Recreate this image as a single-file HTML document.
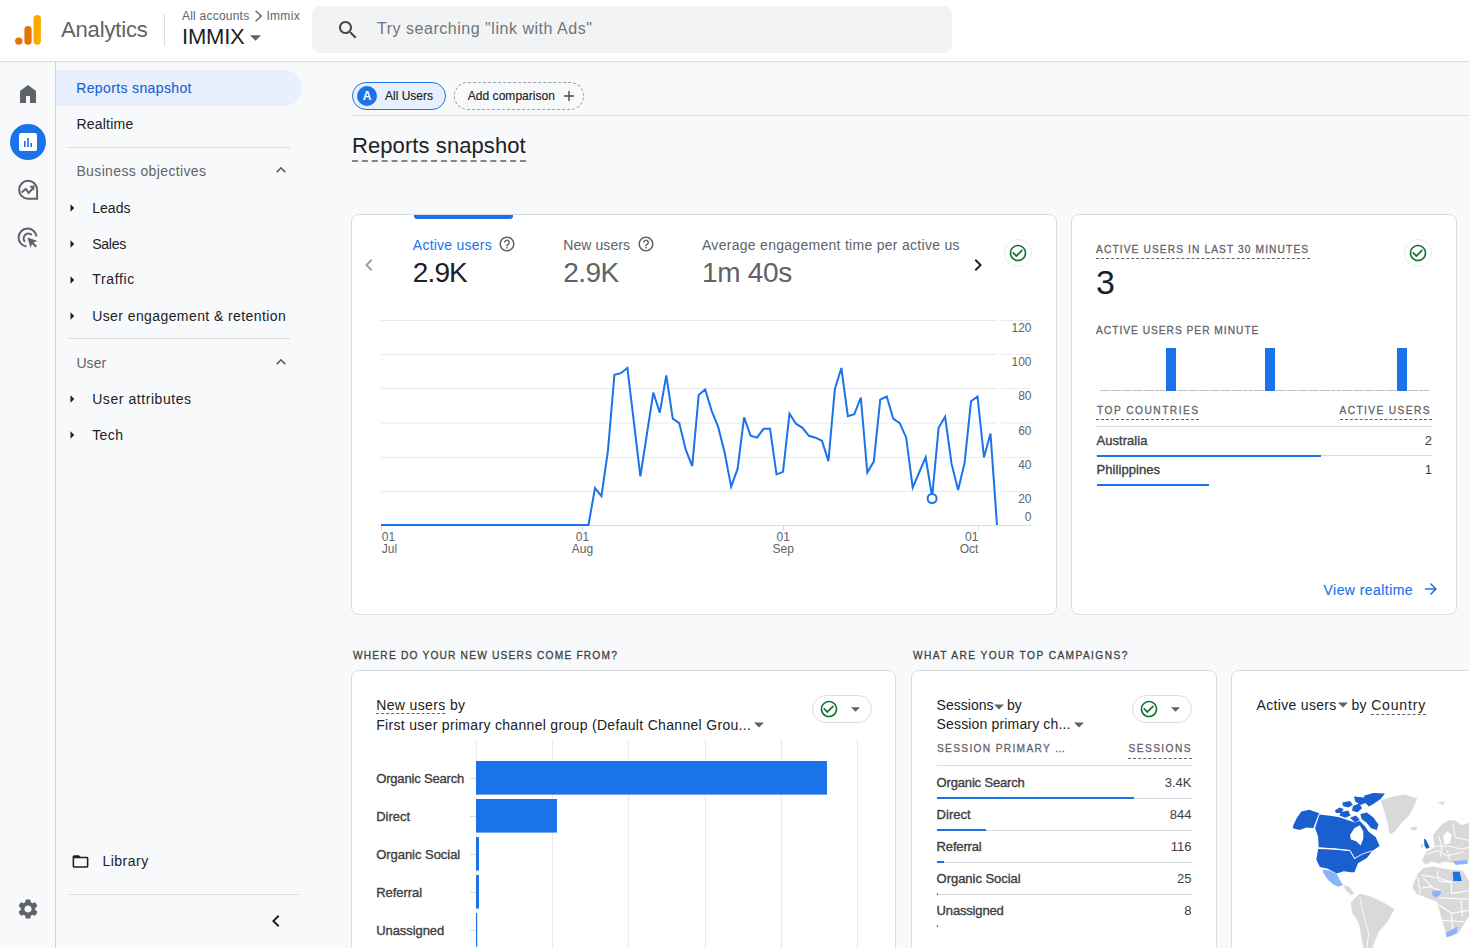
<!DOCTYPE html>
<html><head><meta charset="utf-8"><style>
html,body{margin:0;padding:0;width:1469px;height:948px;overflow:hidden;background:#f8f9fa;font-family:"Liberation Sans", sans-serif;}
.a{position:absolute;}
.t{position:absolute;white-space:nowrap;line-height:1;}
#t0{letter-spacing:-0.161px}
#t1{letter-spacing:0.225px}
#t2{letter-spacing:0.320px}
#t3{letter-spacing:-0.212px}
#t4{letter-spacing:0.525px}
#t5{letter-spacing:0.373px}
#t6{letter-spacing:0.219px}
#t7{letter-spacing:0.371px}
#t8{letter-spacing:0.049px}
#t9{letter-spacing:-0.246px}
#t10{letter-spacing:0.668px}
#t11{letter-spacing:0.411px}
#t12{letter-spacing:0.109px}
#t13{letter-spacing:0.564px}
#t14{letter-spacing:0.430px}
#t15{letter-spacing:0.515px}
#t17{letter-spacing:-0.002px}
#t18{letter-spacing:0.034px}
#t19{letter-spacing:0.085px}
#t20{letter-spacing:0.246px}
#t21{letter-spacing:-0.877px}
#t22{letter-spacing:0.095px}
#t23{letter-spacing:-0.552px}
#t24{letter-spacing:0.286px}
#t25{letter-spacing:-0.305px}
#t41{letter-spacing:1.255px}
#t43{letter-spacing:1.127px}
#t44{letter-spacing:1.658px}
#t45{letter-spacing:1.568px}
#t46{letter-spacing:0.047px}
#t48{letter-spacing:0.075px}
#t50{letter-spacing:0.432px}
#t51{letter-spacing:1.342px}
#t52{letter-spacing:0.374px}
#t53{letter-spacing:0.313px}
#t54{letter-spacing:-0.166px}
#t55{letter-spacing:0.008px}
#t56{letter-spacing:-0.039px}
#t57{letter-spacing:-0.031px}
#t58{letter-spacing:-0.066px}
#t59{letter-spacing:1.583px}
#t60{letter-spacing:0.023px}
#t62{letter-spacing:0.156px}
#t63{letter-spacing:1.488px}
#t64{letter-spacing:1.567px}
#t65{letter-spacing:-0.166px}
#t67{letter-spacing:0.008px}
#t69{letter-spacing:-0.156px}
#t71{letter-spacing:-0.039px}
#t73{letter-spacing:-0.166px}
#t75{letter-spacing:0.312px}
#t77{letter-spacing:0.824px}
</style></head><body>
<div class="a" style="left:0px;top:0px;width:1469px;height:61px;background:#fff;"></div>
<div class="a" style="left:0px;top:61px;width:1469px;height:1px;background:#dadce0;"></div>
<svg class="a" style="left:0;top:0" width="60" height="60" viewBox="0 0 60 60"><rect x="33.5" y="15" width="7.4" height="29.8" rx="3.7" fill="#f9ab00"/><rect x="24.4" y="26" width="7.2" height="18.8" rx="3.6" fill="#e37400"/><circle cx="18.8" cy="41.1" r="3.7" fill="#e37400"/></svg>
<div class="t" id="t0" style="left:61.00px;top:19.37px;font-size:22px;color:#5f6368;font-weight:400;">Analytics</div>
<div class="a" style="left:164px;top:14px;width:1px;height:32px;background:#dadce0;"></div>
<div class="t" id="t1" style="left:182.00px;top:9.64px;font-size:12px;color:#5f6368;font-weight:400;">All accounts</div>
<svg class="a" style="left:0;top:0" width="300" height="30"><polyline points="255.6,10.8 261.2,16 255.6,21.2" fill="none" stroke="#5f6368" stroke-width="1.4"/></svg>
<div class="t" id="t2" style="left:266.40px;top:9.64px;font-size:12px;color:#5f6368;font-weight:400;">Immix</div>
<div class="t" id="t3" style="left:182.00px;top:26.07px;font-size:22px;color:#202124;font-weight:400;">IMMIX</div>
<svg class="a" style="left:250px;top:35px" width="11" height="6" viewBox="0 0 10 5"><path d="M0 0h10L5 5z" fill="#5f6368"/></svg>
<div class="a" style="left:312px;top:6px;width:640px;height:47px;background:#f1f3f4;border-radius:8px;"></div>
<svg class="a" style="left:336px;top:18px;" width="24" height="24" viewBox="0 0 24 24"><path fill="#444746" d="M15.5 14h-.79l-.28-.27C15.41 12.59 16 11.11 16 9.5 16 5.91 13.09 3 9.5 3S3 5.91 3 9.5 5.91 16 9.5 16c1.610 0 3.09-.59 4.23-1.57l.27.28v.79l5 4.99L20.49 19l-4.99-5zm-6 0C7.01 14 5 11.99 5 9.5S7.01 5 9.5 5 14 7.01 14 9.5 11.99 14 9.5 14z"/></svg>
<div class="t" id="t4" style="left:377.00px;top:20.85px;font-size:16px;color:#70757a;font-weight:400;">Try searching "link with Ads"</div>
<div class="a" style="left:0px;top:62px;width:55px;height:886px;background:#f8f9fa;"></div>
<div class="a" style="left:55px;top:62px;width:1px;height:886px;background:#d3d3d3;"></div>
<svg class="a" style="left:16px;top:82px;" width="24" height="24" viewBox="0 0 24 24"><path fill="#5f6368" d="M4 21V9l8-6 8 6v12h-6v-7h-4v7z"/></svg>
<div class="a" style="left:10px;top:124px;width:36px;height:36px;border-radius:50%;background:#1a73e8"></div>
<svg class="a" style="left:16px;top:130px" width="24" height="24" viewBox="0 0 24 24"><rect x="3" y="3" width="18" height="18" rx="2" fill="#fff"/><rect x="8" y="11" width="1.6" height="6" fill="#1a73e8"/><rect x="11.2" y="8" width="1.6" height="9" fill="#1a73e8"/><rect x="14.4" y="13" width="1.6" height="4" fill="#1a73e8"/></svg>
<svg class="a" style="left:16px;top:178px" width="24" height="24" viewBox="0 0 24 24"><path d="M12.1 2.8a9 9 0 1 0 0 18h9v-9a9 9 0 0 0-9-9z" fill="none" stroke="#5f6368" stroke-width="2"/><path d="M5.6 14.6l4.2-3.6 2.9 3.9 4.6-5" fill="none" stroke="#5f6368" stroke-width="2"/><path d="M18.6 7.6l-5.2.5 4.7 4.7z" fill="#5f6368"/></svg>
<svg class="a" style="left:16px;top:226px" width="24" height="24" viewBox="0 0 24 24"><path d="M10.5 20.5A9 9 0 1 1 20.5 10.5" fill="none" stroke="#5f6368" stroke-width="2"/><path d="M9 15.8A4.5 4.5 0 1 1 15.8 9" fill="none" stroke="#5f6368" stroke-width="2"/><path d="M11.5 11.5l10 3.5-4 1.5 3.5 3.5-1.5 1.5-3.5-3.5-1.5 4z" fill="#5f6368"/></svg>
<svg class="a" style="left:16px;top:897px;" width="24" height="24" viewBox="0 0 24 24"><path fill="#5f6368" d="M19.14 12.94c.04-.3.06-.61.06-.94 0-.32-.02-.64-.07-.94l2.03-1.58c.18-.14.23-.41.12-.61l-1.92-3.32c-.12-.22-.37-.29-.59-.22l-2.39.96c-.5-.38-1.03-.7-1.62-.94l-.36-2.54c-.04-.24-.24-.41-.48-.41h-3.84c-.24 0-.43.17-.47.41l-.36 2.54c-.59.24-1.13.57-1.62.94l-2.39-.96c-.22-.08-.47 0-.59.22L2.74 8.87c-.12.21-.08.47.12.61l2.03 1.58c-.05.3-.09.63-.09.94s.02.64.07.94l-2.03 1.58c-.18.14-.23.41-.12.61l1.92 3.32c.12.22.37.29.59.22l2.39-.96c.5.38 1.03.7 1.62.94l.36 2.54c.05.24.24.41.48.41h3.84c.24 0 .44-.17.47-.41l.36-2.54c.59-.24 1.13-.56 1.62-.94l2.39.96c.22.08.47 0 .59-.22l1.92-3.32c.12-.22.07-.47-.12-.61l-2.01-1.58zM12 15.6c-1.98 0-3.6-1.62-3.6-3.6s1.62-3.6 3.6-3.6 3.6 1.62 3.6 3.6-1.62 3.6-3.6 3.6z"/></svg>
<div class="a" style="left:56px;top:62px;width:248px;height:886px;background:#f8f9fa;"></div>
<div class="a" style="left:56px;top:70px;width:246px;height:36px;background:#e8f0fe;border-radius:0 18px 18px 0;"></div>
<div class="t" id="t5" style="left:76.20px;top:81.45px;font-size:14px;color:#1662d6;font-weight:400;-webkit-text-stroke:0.12px #1662d6;">Reports snapshot</div>
<div class="t" id="t6" style="left:76.40px;top:117.35px;font-size:14px;color:#202124;font-weight:400;">Realtime</div>
<div class="a" style="left:68px;top:147px;width:222px;height:1px;background:#dadce0;"></div>
<div class="t" id="t7" style="left:76.40px;top:164.15px;font-size:14px;color:#5f6368;font-weight:400;">Business objectives</div>
<svg class="a" style="left:269px;top:158px;transform:scale(0.8);" width="24" height="24" viewBox="0 0 24 24"><path fill="#5f6368" d="M12 8l-6 6 1.41 1.41L12 10.83l4.59 4.58L18 14z"/></svg>
<svg class="a" style="left:60px;top:195.6px;transform:scale(0.75);" width="24" height="24" viewBox="0 0 24 24"><path fill="#202124" d="M10 17l5-5-5-5v10z"/></svg>
<div class="t" id="t8" style="left:92.20px;top:200.55px;font-size:14px;color:#202124;font-weight:400;">Leads</div>
<svg class="a" style="left:60px;top:231.79999999999998px;transform:scale(0.75);" width="24" height="24" viewBox="0 0 24 24"><path fill="#202124" d="M10 17l5-5-5-5v10z"/></svg>
<div class="t" id="t9" style="left:92.20px;top:236.75px;font-size:14px;color:#202124;font-weight:400;">Sales</div>
<svg class="a" style="left:60px;top:267.5px;transform:scale(0.75);" width="24" height="24" viewBox="0 0 24 24"><path fill="#202124" d="M10 17l5-5-5-5v10z"/></svg>
<div class="t" id="t10" style="left:92.20px;top:272.45px;font-size:14px;color:#202124;font-weight:400;">Traffic</div>
<svg class="a" style="left:60px;top:303.7px;transform:scale(0.75);" width="24" height="24" viewBox="0 0 24 24"><path fill="#202124" d="M10 17l5-5-5-5v10z"/></svg>
<div class="t" id="t11" style="left:92.20px;top:308.65px;font-size:14px;color:#202124;font-weight:400;">User engagement &amp; retention</div>
<div class="a" style="left:68px;top:338px;width:222px;height:1px;background:#dadce0;"></div>
<div class="t" id="t12" style="left:76.40px;top:355.85px;font-size:14px;color:#5f6368;font-weight:400;">User</div>
<svg class="a" style="left:269px;top:350px;transform:scale(0.8);" width="24" height="24" viewBox="0 0 24 24"><path fill="#5f6368" d="M12 8l-6 6 1.41 1.41L12 10.83l4.59 4.58L18 14z"/></svg>
<svg class="a" style="left:60px;top:387.0px;transform:scale(0.75);" width="24" height="24" viewBox="0 0 24 24"><path fill="#202124" d="M10 17l5-5-5-5v10z"/></svg>
<div class="t" id="t13" style="left:92.20px;top:391.95px;font-size:14px;color:#202124;font-weight:400;">User attributes</div>
<svg class="a" style="left:60px;top:422.8px;transform:scale(0.75);" width="24" height="24" viewBox="0 0 24 24"><path fill="#202124" d="M10 17l5-5-5-5v10z"/></svg>
<div class="t" id="t14" style="left:92.20px;top:427.75px;font-size:14px;color:#202124;font-weight:400;">Tech</div>
<svg class="a" style="left:71.4px;top:851.7px;" width="19" height="19" viewBox="0 0 24 24"><path fill="#202124" d="M20 6h-8l-2-2H4c-1.1 0-1.99.9-1.99 2L2 18c0 1.1.9 2 2 2h16c1.1 0 2-.9 2-2V8c0-1.1-.9-2-2-2zm0 12H4V8h16v10z"/></svg>
<div class="t" id="t15" style="left:102.40px;top:854.35px;font-size:14px;color:#202124;font-weight:400;">Library</div>
<div class="a" style="left:69px;top:894px;width:230px;height:1px;background:#dadce0;"></div>
<svg class="a" style="left:264px;top:909px;" width="24" height="24" viewBox="0 0 24 24"><path fill="#202124" d="M15.41 7.41L14 6l-6 6 6 6 1.41-1.41L10.83 12z"/></svg>
<div class="a" style="left:304px;top:62px;width:1165px;height:886px;background:#f8f9fa;"></div>
<div class="a" style="left:352px;top:82px;width:92px;height:26px;border:1px solid #1a73e8;border-radius:14px;background:#e8f0fe"></div>
<div class="a" style="left:357px;top:86px;width:20px;height:20px;border-radius:50%;background:#1a73e8"></div>
<div class="t" id="t16" style="left:367.00px;top:90.24px;font-size:12px;color:#fff;font-weight:700;transform:translateX(-50%);">A</div>
<div class="t" id="t17" style="left:385.00px;top:89.84px;font-size:12px;color:#202124;font-weight:400;-webkit-text-stroke:0.15px #202124;">All Users</div>
<div class="a" style="left:454px;top:82px;width:128px;height:26px;border:1px dashed #9aa0a6;border-radius:14px;"></div>
<div class="t" id="t18" style="left:467.80px;top:89.84px;font-size:12px;color:#202124;font-weight:400;-webkit-text-stroke:0.15px #202124;">Add comparison</div>
<svg class="a" style="left:561px;top:88px;transform:scale(1.05);" width="16" height="16" viewBox="0 0 24 24"><path fill="#444746" d="M19 13h-6v6h-2v-6H5v-2h6V5h2v6h6v2z"/></svg>
<div class="a" style="left:352px;top:115px;width:1117px;height:1px;background:#dadce0;"></div>
<div class="t" id="t19" style="left:352.00px;top:134.57px;font-size:22px;color:#202124;font-weight:400;">Reports snapshot</div>
<div class="a" style="left:352px;top:160px;width:174px;height:0;border-top:2px dashed #80868b"></div>
<div class="a" style="left:351px;top:214px;width:704px;height:399px;border:1px solid #dadce0;border-radius:8px;background:#fff"></div>
<div class="a" style="left:413.8px;top:215px;width:99.3px;height:3.6px;background:#1a73e8;border-radius:0 0 3px 3px;"></div>
<svg class="a" style="left:357px;top:253px;" width="24" height="24" viewBox="0 0 24 24"><path fill="#9aa0a6" d="M15.41 7.41L14 6l-6 6 6 6 1.41-1.41L10.83 12z"/></svg>
<div class="t" id="t20" style="left:412.80px;top:237.85px;font-size:14px;color:#1a73e8;font-weight:400;">Active users</div>
<svg class="a" style="left:497.6px;top:235px;" width="18" height="18" viewBox="0 0 24 24"><path fill="#5f6368" d="M11 18h2v-2h-2v2zm1-16C6.48 2 2 6.48 2 12s4.48 10 10 10 10-4.48 10-10S17.52 2 12 2zm0 18c-4.410 0-8-3.59-8-8s3.59-8 8-8 8 3.59 8 8-3.59 8-8 8zm0-14c-2.21 0-4 1.79-4 4h2c0-1.1.9-2 2-2s2 .9 2 2c0 2-3 1.75-3 5h2c0-2.25 3-2.5 3-5 0-2.21-1.79-4-4-4z"/></svg>
<div class="t" id="t21" style="left:412.80px;top:258.99px;font-size:28px;color:#202124;font-weight:400;">2.9K</div>
<div class="t" id="t22" style="left:563.20px;top:237.85px;font-size:14px;color:#5f6368;font-weight:400;">New users</div>
<svg class="a" style="left:636.6px;top:235px;" width="18" height="18" viewBox="0 0 24 24"><path fill="#5f6368" d="M11 18h2v-2h-2v2zm1-16C6.48 2 2 6.48 2 12s4.48 10 10 10 10-4.48 10-10S17.52 2 12 2zm0 18c-4.410 0-8-3.59-8-8s3.59-8 8-8 8 3.59 8 8-3.59 8-8 8zm0-14c-2.21 0-4 1.79-4 4h2c0-1.1.9-2 2-2s2 .9 2 2c0 2-3 1.75-3 5h2c0-2.25 3-2.5 3-5 0-2.21-1.79-4-4-4z"/></svg>
<div class="t" id="t23" style="left:563.20px;top:258.99px;font-size:28px;color:#5f6368;font-weight:400;">2.9K</div>
<div class="t" id="t24" style="left:702.00px;top:237.85px;font-size:14px;color:#5f6368;font-weight:400;">Average engagement time per active us</div>
<div class="t" id="t25" style="left:702.00px;top:258.99px;font-size:28px;color:#5f6368;font-weight:400;">1m 40s</div>
<svg class="a" style="left:966px;top:253px;" width="24" height="24" viewBox="0 0 24 24"><path fill="#202124" d="M10 6L8.59 7.41 13.17 12l-4.58 4.59L10 18l6-6z"/></svg>
<div class="a" style="left:1003.6px;top:239px;width:28px;height:28px;border:1px solid #e8eaed;border-radius:50%;background:#fff;box-sizing:border-box"></div>
<svg class="a" style="left:1007.6px;top:243px;" width="20" height="20" viewBox="0 0 24 24"><path fill="#137333" d="M16.59 7.58L10 14.17l-3.59-3.58L5 12l5 5 8-8zM12 2C6.48 2 2 6.48 2 12s4.48 10 10 10 10-4.48 10-10S17.52 2 12 2zm0 18c-4.42 0-8-3.58-8-8s3.58-8 8-8 8 3.58 8 8-3.58 8-8 8z"/></svg>
<svg class="a" style="left:0;top:0" width="1469" height="948"><line x1="381" y1="320.5" x2="997" y2="320.5" stroke="#e8eaed" stroke-width="1"/><line x1="1001" y1="320.5" x2="1031" y2="320.5" stroke="#e8eaed" stroke-width="1"/><line x1="381" y1="354.5" x2="997" y2="354.5" stroke="#e8eaed" stroke-width="1"/><line x1="1001" y1="354.5" x2="1031" y2="354.5" stroke="#e8eaed" stroke-width="1"/><line x1="381" y1="388.5" x2="997" y2="388.5" stroke="#e8eaed" stroke-width="1"/><line x1="1001" y1="388.5" x2="1031" y2="388.5" stroke="#e8eaed" stroke-width="1"/><line x1="381" y1="423" x2="997" y2="423" stroke="#e8eaed" stroke-width="1"/><line x1="1001" y1="423" x2="1031" y2="423" stroke="#e8eaed" stroke-width="1"/><line x1="381" y1="457.5" x2="997" y2="457.5" stroke="#e8eaed" stroke-width="1"/><line x1="1001" y1="457.5" x2="1031" y2="457.5" stroke="#e8eaed" stroke-width="1"/><line x1="381" y1="491.5" x2="997" y2="491.5" stroke="#e8eaed" stroke-width="1"/><line x1="1001" y1="491.5" x2="1031" y2="491.5" stroke="#e8eaed" stroke-width="1"/><line x1="381" y1="525.5" x2="1031" y2="525.5" stroke="#dadce0" stroke-width="1"/><line x1="381.5" y1="525" x2="381.5" y2="531" stroke="#dadce0" stroke-width="1"/><line x1="582.5" y1="525" x2="582.5" y2="531" stroke="#dadce0" stroke-width="1"/><line x1="783.5" y1="525" x2="783.5" y2="531" stroke="#dadce0" stroke-width="1"/><line x1="978.5" y1="525" x2="978.5" y2="531" stroke="#dadce0" stroke-width="1"/><polyline points="381.00,525.00 387.48,525.00 393.97,525.00 400.45,525.00 406.94,525.00 413.42,525.00 419.90,525.00 426.39,525.00 432.87,525.00 439.36,525.00 445.84,525.00 452.32,525.00 458.81,525.00 465.29,525.00 471.78,525.00 478.26,525.00 484.74,525.00 491.23,525.00 497.71,525.00 504.20,525.00 510.68,525.00 517.16,525.00 523.65,525.00 530.13,525.00 536.62,525.00 543.10,525.00 549.58,525.00 556.07,525.00 562.55,525.00 569.04,525.00 575.52,525.00 582.00,525.00 588.49,525.00 594.97,488.20 601.46,496.20 607.94,450.60 614.42,374.70 620.91,373.20 627.39,368.00 633.88,422.20 640.36,476.40 646.84,434.50 653.33,392.60 659.81,412.70 666.30,375.30 672.78,418.70 679.26,423.10 685.75,449.70 692.23,466.20 698.72,395.00 705.20,389.50 711.68,410.80 718.17,426.90 724.65,452.50 731.14,486.70 737.62,468.70 744.10,417.40 750.59,435.80 757.07,437.70 763.56,428.80 770.04,428.80 776.52,474.40 783.01,471.90 789.49,413.60 795.98,423.70 802.46,427.80 808.94,435.80 815.43,437.70 821.91,440.80 828.40,461.10 834.88,388.90 841.36,368.00 847.85,416.10 854.33,414.20 860.82,397.50 867.30,472.50 873.78,461.60 880.27,399.70 886.75,396.50 893.24,418.70 899.72,423.10 906.20,437.70 912.69,487.60 919.17,472.50 925.66,457.30 932.14,497.00 938.62,427.80 945.11,416.80 951.59,463.90 958.08,490.10 964.56,463.00 971.04,401.30 977.53,396.50 984.01,457.30 990.50,433.50 996.98,525.00" fill="none" stroke="#1a73e8" stroke-width="2" stroke-linejoin="miter"/><circle cx="932.1" cy="498.5" r="4.5" fill="#fff" stroke="#1a73e8" stroke-width="2"/></svg>
<div class="t" id="t26" style="right:437.50px;top:321.74px;font-size:12px;color:#5f6368;font-weight:400;">120</div>
<div class="t" id="t27" style="right:437.50px;top:355.84px;font-size:12px;color:#5f6368;font-weight:400;">100</div>
<div class="t" id="t28" style="right:437.50px;top:389.84px;font-size:12px;color:#5f6368;font-weight:400;">80</div>
<div class="t" id="t29" style="right:437.50px;top:424.84px;font-size:12px;color:#5f6368;font-weight:400;">60</div>
<div class="t" id="t30" style="right:437.50px;top:458.84px;font-size:12px;color:#5f6368;font-weight:400;">40</div>
<div class="t" id="t31" style="right:437.50px;top:492.84px;font-size:12px;color:#5f6368;font-weight:400;">20</div>
<div class="t" id="t32" style="right:437.50px;top:510.84px;font-size:12px;color:#5f6368;font-weight:400;">0</div>
<div class="t" id="t33" style="left:381.80px;top:530.54px;font-size:12px;color:#5f6368;font-weight:400;">01</div>
<div class="t" id="t34" style="left:381.80px;top:542.64px;font-size:12px;color:#5f6368;font-weight:400;">Jul</div>
<div class="t" id="t35" style="left:582.40px;top:530.54px;font-size:12px;color:#5f6368;font-weight:400;transform:translateX(-50%);">01</div>
<div class="t" id="t36" style="left:582.40px;top:542.64px;font-size:12px;color:#5f6368;font-weight:400;transform:translateX(-50%);">Aug</div>
<div class="t" id="t37" style="left:783.20px;top:530.54px;font-size:12px;color:#5f6368;font-weight:400;transform:translateX(-50%);">01</div>
<div class="t" id="t38" style="left:783.20px;top:542.64px;font-size:12px;color:#5f6368;font-weight:400;transform:translateX(-50%);">Sep</div>
<div class="t" id="t39" style="right:490.70px;top:530.54px;font-size:12px;color:#5f6368;font-weight:400;">01</div>
<div class="t" id="t40" style="right:490.70px;top:542.64px;font-size:12px;color:#5f6368;font-weight:400;">Oct</div>
<div class="a" style="left:1071px;top:214px;width:384px;height:399px;border:1px solid #dadce0;border-radius:8px;background:#fff"></div>
<div class="t" id="t41" style="left:1096.00px;top:243.08px;font-size:11.6px;color:#5f6368;font-weight:400;-webkit-text-stroke:0.3px #5f6368;transform:scaleX(0.88);transform-origin:left center;">ACTIVE USERS IN LAST 30 MINUTES</div>
<div class="a" style="left:1096px;top:257.5px;width:214px;height:0;border-top:1px dashed #5f6368"></div>
<div class="t" id="t42" style="left:1096.00px;top:265.01px;font-size:34px;color:#202124;font-weight:400;">3</div>
<div class="a" style="left:1403.9px;top:239px;width:28px;height:28px;border:1px solid #e8eaed;border-radius:50%;background:#fff;box-sizing:border-box"></div>
<svg class="a" style="left:1407.9px;top:243px;" width="20" height="20" viewBox="0 0 24 24"><path fill="#137333" d="M16.59 7.58L10 14.17l-3.59-3.58L5 12l5 5 8-8zM12 2C6.48 2 2 6.48 2 12s4.48 10 10 10 10-4.48 10-10S17.52 2 12 2zm0 18c-4.42 0-8-3.58-8-8s3.58-8 8-8 8 3.58 8 8-3.58 8-8 8z"/></svg>
<div class="t" id="t43" style="left:1096.00px;top:324.48px;font-size:11.6px;color:#5f6368;font-weight:400;-webkit-text-stroke:0.3px #5f6368;transform:scaleX(0.88);transform-origin:left center;">ACTIVE USERS PER MINUTE</div>
<svg class="a" style="left:0;top:0" width="1469" height="948"><rect x="1100" y="390" width="10" height="1" fill="#bdc1c6"/><rect x="1111" y="390" width="10" height="1" fill="#bdc1c6"/><rect x="1122" y="390" width="10" height="1" fill="#bdc1c6"/><rect x="1133" y="390" width="10" height="1" fill="#bdc1c6"/><rect x="1144" y="390" width="10" height="1" fill="#bdc1c6"/><rect x="1155" y="390" width="10" height="1" fill="#bdc1c6"/><rect x="1166" y="348" width="10" height="43" fill="#1a73e8"/><rect x="1177" y="390" width="10" height="1" fill="#bdc1c6"/><rect x="1188" y="390" width="10" height="1" fill="#bdc1c6"/><rect x="1199" y="390" width="10" height="1" fill="#bdc1c6"/><rect x="1210" y="390" width="10" height="1" fill="#bdc1c6"/><rect x="1221" y="390" width="10" height="1" fill="#bdc1c6"/><rect x="1232" y="390" width="10" height="1" fill="#bdc1c6"/><rect x="1243" y="390" width="10" height="1" fill="#bdc1c6"/><rect x="1254" y="390" width="10" height="1" fill="#bdc1c6"/><rect x="1265" y="348" width="10" height="43" fill="#1a73e8"/><rect x="1276" y="390" width="10" height="1" fill="#bdc1c6"/><rect x="1287" y="390" width="10" height="1" fill="#bdc1c6"/><rect x="1298" y="390" width="10" height="1" fill="#bdc1c6"/><rect x="1309" y="390" width="10" height="1" fill="#bdc1c6"/><rect x="1320" y="390" width="10" height="1" fill="#bdc1c6"/><rect x="1331" y="390" width="10" height="1" fill="#bdc1c6"/><rect x="1342" y="390" width="10" height="1" fill="#bdc1c6"/><rect x="1353" y="390" width="10" height="1" fill="#bdc1c6"/><rect x="1364" y="390" width="10" height="1" fill="#bdc1c6"/><rect x="1375" y="390" width="10" height="1" fill="#bdc1c6"/><rect x="1386" y="390" width="10" height="1" fill="#bdc1c6"/><rect x="1397" y="348" width="10" height="43" fill="#1a73e8"/><rect x="1408" y="390" width="10" height="1" fill="#bdc1c6"/><rect x="1419" y="390" width="10" height="1" fill="#bdc1c6"/></svg>
<div class="t" id="t44" style="left:1096.50px;top:404.38px;font-size:11.6px;color:#5f6368;font-weight:400;-webkit-text-stroke:0.3px #5f6368;transform:scaleX(0.88);transform-origin:left center;">TOP COUNTRIES</div>
<div class="a" style="left:1096px;top:419px;width:103px;height:0;border-top:1px dashed #5f6368"></div>
<div class="t" id="t45" style="right:37.70px;top:404.38px;font-size:11.6px;color:#5f6368;font-weight:400;-webkit-text-stroke:0.3px #5f6368;transform:scaleX(0.88);transform-origin:right center;">ACTIVE USERS</div>
<div class="a" style="left:1340px;top:419px;width:92px;height:0;border-top:1px dashed #5f6368"></div>
<div class="a" style="left:1096px;top:426px;width:336px;height:1px;background:#dadce0;"></div>
<div class="t" id="t46" style="left:1096.50px;top:434.29px;font-size:13px;color:#3c4043;font-weight:400;-webkit-text-stroke:0.35px #3c4043;">Australia</div>
<div class="t" id="t47" style="right:37.00px;top:434.29px;font-size:13px;color:#3c4043;font-weight:400;">2</div>
<div class="a" style="left:1096px;top:455px;width:336px;height:1px;background:#dadce0;"></div>
<div class="a" style="left:1096.6px;top:454.8px;width:224.4px;height:2px;background:#1a73e8;"></div>
<div class="t" id="t48" style="left:1096.50px;top:462.99px;font-size:13px;color:#3c4043;font-weight:400;-webkit-text-stroke:0.35px #3c4043;">Philippines</div>
<div class="t" id="t49" style="right:37.00px;top:462.99px;font-size:13px;color:#3c4043;font-weight:400;">1</div>
<div class="a" style="left:1096.6px;top:483.5px;width:112.2px;height:2px;background:#1a73e8;"></div>
<div class="t" id="t50" style="left:1323.60px;top:582.95px;font-size:14px;color:#1a73e8;font-weight:400;-webkit-text-stroke:0.15px #1a73e8;">View realtime</div>
<svg class="a" style="left:1422px;top:580.2px;" width="18" height="18" viewBox="0 0 24 24"><path fill="#1a73e8" d="M12 4l-1.41 1.41L16.17 11H4v2h12.17l-5.58 5.59L12 20l8-8z"/></svg>
<div class="t" id="t51" style="left:352.60px;top:648.88px;font-size:11.6px;color:#3c4043;font-weight:400;-webkit-text-stroke:0.3px #3c4043;transform:scaleX(0.88);transform-origin:left center;">WHERE DO YOUR NEW USERS COME FROM?</div>
<div class="a" style="left:351px;top:670px;width:543px;height:300px;border:1px solid #dadce0;border-radius:8px;background:#fff"></div>
<div class="t" id="t52" style="left:376.20px;top:697.95px;font-size:14px;color:#202124;font-weight:400;">New users by</div>
<div class="a" style="left:376px;top:713px;width:69px;height:0;border-top:1px dashed #5f6368"></div>
<div class="t" id="t53" style="left:376.20px;top:718.05px;font-size:14px;color:#202124;font-weight:400;">First user primary channel group (Default Channel Grou...</div>
<svg class="a" style="left:754px;top:722px" width="10" height="6" viewBox="0 0 10 5"><path d="M0 0h10L5 5z" fill="#5f6368"/></svg>
<div class="a" style="left:812px;top:695px;width:60px;height:28px;border:1px solid #dadce0;border-radius:14px;box-sizing:border-box;background:#fff"></div>
<svg class="a" style="left:819px;top:699px;" width="20" height="20" viewBox="0 0 24 24"><path fill="#137333" d="M16.59 7.58L10 14.17l-3.59-3.58L5 12l5 5 8-8zM12 2C6.48 2 2 6.48 2 12s4.48 10 10 10 10-4.48 10-10S17.52 2 12 2zm0 18c-4.42 0-8-3.58-8-8s3.58-8 8-8 8 3.58 8 8-3.58 8-8 8z"/></svg>
<svg class="a" style="left:851px;top:707px" width="9" height="5" viewBox="0 0 10 5"><path d="M0 0h10L5 5z" fill="#5f6368"/></svg>
<svg class="a" style="left:0;top:0" width="1469" height="948"><line x1="476.5" y1="740" x2="476.5" y2="948" stroke="#e8eaed" stroke-width="1.2"/><line x1="552.5" y1="740" x2="552.5" y2="948" stroke="#e8eaed" stroke-width="1.2"/><line x1="628.5" y1="740" x2="628.5" y2="948" stroke="#e8eaed" stroke-width="1.2"/><line x1="705.5" y1="740" x2="705.5" y2="948" stroke="#e8eaed" stroke-width="1.2"/><line x1="781.5" y1="740" x2="781.5" y2="948" stroke="#e8eaed" stroke-width="1.2"/><line x1="857.5" y1="740" x2="857.5" y2="948" stroke="#e8eaed" stroke-width="1.2"/><rect x="476" y="761" width="351" height="33.6" fill="#1a73e8"/><line x1="470" y1="778.5" x2="476" y2="778.5" stroke="#dadce0"/><rect x="476" y="799" width="81" height="33.6" fill="#1a73e8"/><line x1="470" y1="816.5" x2="476" y2="816.5" stroke="#dadce0"/><rect x="476" y="837" width="3" height="33.6" fill="#1a73e8"/><line x1="470" y1="854.5" x2="476" y2="854.5" stroke="#dadce0"/><rect x="476" y="875" width="3" height="33.6" fill="#1a73e8"/><line x1="470" y1="892.5" x2="476" y2="892.5" stroke="#dadce0"/><rect x="476" y="913" width="1.2" height="33.6" fill="#1a73e8"/><line x1="470" y1="930.5" x2="476" y2="930.5" stroke="#dadce0"/></svg>
<div class="t" id="t54" style="left:376.20px;top:771.79px;font-size:13px;color:#3c4043;font-weight:400;-webkit-text-stroke:0.35px #3c4043;">Organic Search</div>
<div class="t" id="t55" style="left:376.20px;top:809.79px;font-size:13px;color:#3c4043;font-weight:400;-webkit-text-stroke:0.35px #3c4043;">Direct</div>
<div class="t" id="t56" style="left:376.20px;top:847.79px;font-size:13px;color:#3c4043;font-weight:400;-webkit-text-stroke:0.35px #3c4043;">Organic Social</div>
<div class="t" id="t57" style="left:376.20px;top:885.79px;font-size:13px;color:#3c4043;font-weight:400;-webkit-text-stroke:0.35px #3c4043;">Referral</div>
<div class="t" id="t58" style="left:376.20px;top:923.79px;font-size:13px;color:#3c4043;font-weight:400;-webkit-text-stroke:0.35px #3c4043;">Unassigned</div>
<div class="t" id="t59" style="left:912.60px;top:648.88px;font-size:11.6px;color:#3c4043;font-weight:400;-webkit-text-stroke:0.3px #3c4043;transform:scaleX(0.88);transform-origin:left center;">WHAT ARE YOUR TOP CAMPAIGNS?</div>
<div class="a" style="left:911px;top:670px;width:304px;height:300px;border:1px solid #dadce0;border-radius:8px;background:#fff"></div>
<div class="t" id="t60" style="left:936.60px;top:698.35px;font-size:14px;color:#202124;font-weight:400;">Sessions</div>
<svg class="a" style="left:993.5px;top:704px" width="10" height="6" viewBox="0 0 10 5"><path d="M0 0h10L5 5z" fill="#5f6368"/></svg>
<div class="t" id="t61" style="left:1007.00px;top:698.35px;font-size:14px;color:#202124;font-weight:400;">by</div>
<div class="t" id="t62" style="left:936.60px;top:717.45px;font-size:14px;color:#202124;font-weight:400;">Session primary ch...</div>
<svg class="a" style="left:1074px;top:722px" width="10" height="6" viewBox="0 0 10 5"><path d="M0 0h10L5 5z" fill="#5f6368"/></svg>
<div class="a" style="left:1132px;top:695px;width:60px;height:28px;border:1px solid #dadce0;border-radius:14px;box-sizing:border-box;background:#fff"></div>
<svg class="a" style="left:1139px;top:699px;" width="20" height="20" viewBox="0 0 24 24"><path fill="#137333" d="M16.59 7.58L10 14.17l-3.59-3.58L5 12l5 5 8-8zM12 2C6.48 2 2 6.48 2 12s4.48 10 10 10 10-4.48 10-10S17.52 2 12 2zm0 18c-4.42 0-8-3.58-8-8s3.58-8 8-8 8 3.58 8 8-3.58 8-8 8z"/></svg>
<svg class="a" style="left:1171px;top:707px" width="9" height="5" viewBox="0 0 10 5"><path d="M0 0h10L5 5z" fill="#5f6368"/></svg>
<div class="t" id="t63" style="left:936.60px;top:742.38px;font-size:11.6px;color:#5f6368;font-weight:400;-webkit-text-stroke:0.3px #5f6368;transform:scaleX(0.88);transform-origin:left center;">SESSION PRIMARY …</div>
<div class="t" id="t64" style="right:277.50px;top:742.38px;font-size:11.6px;color:#5f6368;font-weight:400;-webkit-text-stroke:0.3px #5f6368;transform:scaleX(0.88);transform-origin:right center;">SESSIONS</div>
<div class="a" style="left:1128px;top:758px;width:64px;height:0;border-top:1px dashed #5f6368"></div>
<div class="a" style="left:936.6px;top:765px;width:255px;height:1px;background:#dadce0;"></div>
<div class="t" id="t65" style="left:936.60px;top:775.99px;font-size:13px;color:#3c4043;font-weight:400;-webkit-text-stroke:0.35px #3c4043;">Organic Search</div>
<div class="t" id="t66" style="right:277.50px;top:775.99px;font-size:13px;color:#3c4043;font-weight:400;">3.4K</div>
<div class="a" style="left:936.6px;top:797.8px;width:255px;height:1px;background:#dadce0;"></div>
<div class="a" style="left:936.6px;top:796.8px;width:197px;height:2px;background:#1a73e8;"></div>
<div class="t" id="t67" style="left:936.60px;top:807.99px;font-size:13px;color:#3c4043;font-weight:400;-webkit-text-stroke:0.35px #3c4043;">Direct</div>
<div class="t" id="t68" style="right:277.50px;top:807.99px;font-size:13px;color:#3c4043;font-weight:400;">844</div>
<div class="a" style="left:936.6px;top:829.8px;width:255px;height:1px;background:#dadce0;"></div>
<div class="a" style="left:936.6px;top:828.8px;width:49px;height:2px;background:#1a73e8;"></div>
<div class="t" id="t69" style="left:936.60px;top:839.99px;font-size:13px;color:#3c4043;font-weight:400;-webkit-text-stroke:0.35px #3c4043;">Referral</div>
<div class="t" id="t70" style="right:277.50px;top:839.99px;font-size:13px;color:#3c4043;font-weight:400;">116</div>
<div class="a" style="left:936.6px;top:861.8px;width:255px;height:1px;background:#dadce0;"></div>
<div class="a" style="left:936.6px;top:860.8px;width:7px;height:2px;background:#1a73e8;"></div>
<div class="t" id="t71" style="left:936.60px;top:871.99px;font-size:13px;color:#3c4043;font-weight:400;-webkit-text-stroke:0.35px #3c4043;">Organic Social</div>
<div class="t" id="t72" style="right:277.50px;top:871.99px;font-size:13px;color:#3c4043;font-weight:400;">25</div>
<div class="a" style="left:936.6px;top:893.8px;width:255px;height:1px;background:#dadce0;"></div>
<div class="a" style="left:936.6px;top:892.8px;width:1.5px;height:2px;background:#1a73e8;"></div>
<div class="t" id="t73" style="left:936.60px;top:903.99px;font-size:13px;color:#3c4043;font-weight:400;-webkit-text-stroke:0.35px #3c4043;">Unassigned</div>
<div class="t" id="t74" style="right:277.50px;top:903.99px;font-size:13px;color:#3c4043;font-weight:400;">8</div>
<div class="a" style="left:936.6px;top:924.8px;width:1px;height:2px;background:#1a73e8;"></div>
<div class="a" style="left:1231px;top:670px;width:300px;height:300px;border:1px solid #dadce0;border-radius:8px;background:#fff"></div>
<div class="t" id="t75" style="left:1256.60px;top:697.95px;font-size:14px;color:#202124;font-weight:400;">Active users</div>
<svg class="a" style="left:1337.5px;top:702px" width="10" height="6" viewBox="0 0 10 5"><path d="M0 0h10L5 5z" fill="#5f6368"/></svg>
<div class="t" id="t76" style="left:1351.60px;top:697.95px;font-size:14px;color:#202124;font-weight:400;">by</div>
<div class="t" id="t77" style="left:1371.20px;top:697.95px;font-size:14px;color:#202124;font-weight:400;">Country</div>
<div class="a" style="left:1371px;top:713.5px;width:55px;height:0;border-top:1px dashed #5f6368"></div>
<svg class="a" style="left:0;top:0" width="1469" height="948"><polygon points="1293.3,825.2 1296.8,818.1 1301.3,811.6 1309.3,809.8 1319.4,813.3 1313.7,828.2 1306.6,827.5 1299.5,830.0 1292.8,828.2" fill="#1a5fd0" stroke="none" stroke-width="0"/><polygon points="1319.4,814.6 1327.9,815.5 1338.5,816.9 1347.4,819.9 1354.5,822.6 1359.8,821.1 1365.1,826.5 1368.7,831.8 1375.7,837.1 1379.6,846.0 1372.2,850.9 1365.1,854.5 1358.9,857.7 1354.5,858.0 1350.0,850.0 1333.2,848.3 1318.7,847.4 1318.1,836.7 1315.1,827.9" fill="#1a5fd0" stroke="none" stroke-width="0"/><polygon points="1350.0,835.0 1354.5,827.9 1359.8,825.2 1363.3,831.4 1363.3,838.5 1360.7,845.6 1356.2,841.2 1350.9,839.4" fill="#fff" stroke="none" stroke-width="0"/><polygon points="1334.9,810.5 1339.5,807.6 1343.6,809.1 1341.3,813.1 1336.0,813.1" fill="#1a5fd0" stroke="none" stroke-width="0"/><polygon points="1340.7,811.9 1348.2,810.5 1350.5,815.4 1345.3,817.7 1339.5,815.4" fill="#1a5fd0" stroke="none" stroke-width="0"/><polygon points="1342.4,802.4 1350.0,801.0 1352.9,804.7 1348.2,807.6 1343.0,806.1" fill="#1a5fd0" stroke="none" stroke-width="0"/><polygon points="1352.9,806.1 1359.2,803.6 1362.1,808.2 1357.5,812.3 1352.1,810.8" fill="#1a5fd0" stroke="none" stroke-width="0"/><polygon points="1354.0,796.6 1363.9,797.5 1366.8,802.4 1360.4,805.0 1355.2,801.5" fill="#1a5fd0" stroke="none" stroke-width="0"/><polygon points="1363.9,795.7 1373.2,792.9 1385.0,793.4 1380.7,798.9 1373.7,803.8 1368.8,806.5 1365.0,802.6" fill="#1a5fd0" stroke="none" stroke-width="0"/><polygon points="1360.4,814.0 1366.8,812.6 1373.4,817.5 1378.4,824.4 1376.9,830.0 1371.1,828.2 1366.4,822.4 1361.6,818.9" fill="#1a5fd0" stroke="none" stroke-width="0"/><polygon points="1350.0,817.7 1356.0,815.4 1359.8,820.0 1354.8,822.4" fill="#1a5fd0" stroke="none" stroke-width="0"/><polygon points="1318.1,849.1 1333.2,849.5 1350.0,850.9 1354.5,858.9 1363.3,853.6 1372.2,850.9 1366.9,858.0 1358.0,863.3 1354.5,872.2 1350.9,872.2 1343.8,871.3 1336.7,873.6 1327.9,868.7 1319.9,866.9 1316.3,859.8" fill="#1a5fd0" stroke="none" stroke-width="0"/><polyline points="1318.7,847.9 1333.2,848.8 1350.0,850.6 1354.5,858.4 1363.3,853.6 1372.2,850.9" fill="none" stroke="#fff" stroke-width="0.9"/><polyline points="1319.4,813.7 1313.7,828.2" fill="none" stroke="#fff" stroke-width="0.9"/><polygon points="1322.2,869.5 1329.6,870.4 1336.7,874.0 1339.4,879.3 1342.9,885.0 1338.5,886.7 1333.2,884.6 1327.5,879.3 1324.0,874.0" fill="#8ab4f8" stroke="none" stroke-width="0"/><polygon points="1342.9,885.0 1349.1,886.4 1354.5,893.5 1350.9,895.2 1345.6,889.9" fill="#d9d9d9" stroke="none" stroke-width="0"/><polygon points="1350.9,902.3 1359.8,893.5 1372.2,897.0 1386.4,904.1 1394.4,909.4 1387.3,921.8 1378.4,932.5 1372.2,948.1 1363.3,948.1 1358.9,923.6 1351.8,912.1" fill="#d9d9d9" stroke="none" stroke-width="0"/><polyline points="1359.8,897.0 1363.3,914.8 1368.7,932.5 1366.9,948.1" fill="none" stroke="#fff" stroke-width="0.8"/><polygon points="1381.0,800.5 1391.3,797.0 1403.4,794.5 1417.1,797.9 1413.7,807.3 1408.5,815.9 1401.6,822.8 1394.8,831.4 1389.6,834.8 1387.9,824.5 1384.5,812.5" fill="#d9d9d9" stroke="none" stroke-width="0"/><polygon points="1410.2,828.0 1415.4,827.1 1417.5,829.3 1412.8,830.7" fill="#d9d9d9" stroke="none" stroke-width="0"/><polygon points="1437.7,802.2 1444.6,801.3 1442.9,805.6" fill="#d9d9d9" stroke="none" stroke-width="0"/><polygon points="1421.8,861.3 1426.1,851.8 1434.5,847.6 1433.1,834.6 1441.5,824.8 1448.5,819.9 1455.5,820.6 1461.1,825.1 1469.0,823.1 1469.0,860.2 1463.9,864.4 1452.7,863.0 1444.3,861.6 1438.7,863.8 1431.7,861.6 1426.1,864.4" fill="#d9d9d9" stroke="none" stroke-width="0"/><polygon points="1443.2,836.1 1447.1,831.6 1451.6,834.6 1450.2,843.1 1444.6,844.8" fill="#fff" stroke="none" stroke-width="0"/><polyline points="1426.1,854.6 1437.3,850.4 1447.1,856.0 1463.9,851.8" fill="none" stroke="#fff" stroke-width="1.0"/><polyline points="1434.5,846.2 1449.9,846.2 1461.1,849.0 1469.0,847.3" fill="none" stroke="#fff" stroke-width="1.0"/><polyline points="1438.7,836.1 1441.8,847.3 1440.1,857.1" fill="none" stroke="#fff" stroke-width="1.0"/><polyline points="1452.7,823.4 1455.5,837.5 1469.0,840.3" fill="none" stroke="#fff" stroke-width="1.0"/><polyline points="1447.1,850.1 1449.9,859.9" fill="none" stroke="#fff" stroke-width="1.0"/><polygon points="1423.9,838.6 1426.1,840.0 1429.6,847.3 1426.8,849.0 1424.6,845.9" fill="#1a5fd0" stroke="none" stroke-width="0"/><polygon points="1421.1,843.8 1423.5,844.5 1423.2,847.6 1420.7,847.3" fill="#d9d9d9" stroke="none" stroke-width="0"/><polygon points="1410.3,827.4 1415.9,826.5 1416.9,829.0 1412.0,829.9" fill="#d9d9d9" stroke="none" stroke-width="0"/><polygon points="1453.4,861.3 1466.8,859.9 1468.4,863.4 1455.5,865.0" fill="#8ab4f8" stroke="none" stroke-width="0"/><polygon points="1413.4,883.8 1417.6,873.9 1423.2,868.3 1433.1,866.2 1441.5,868.3 1451.3,869.7 1462.5,870.4 1469.0,881.0 1469.0,916.1 1463.9,924.5 1458.3,932.9 1447.1,937.8 1444.3,927.3 1440.1,913.2 1437.3,902.0 1426.1,897.8 1416.2,893.6 1412.7,888.0" fill="#d9d9d9" stroke="none" stroke-width="0"/><polyline points="1421.8,875.4 1437.3,877.5 1452.7,882.4" fill="none" stroke="#fff" stroke-width="1.1"/><polyline points="1437.3,871.1 1438.7,881.0 1451.3,882.4" fill="none" stroke="#fff" stroke-width="1.1"/><polyline points="1417.6,876.8 1420.4,893.6" fill="none" stroke="#fff" stroke-width="1.1"/><polyline points="1423.2,878.2 1433.1,888.0 1441.5,890.8" fill="none" stroke="#fff" stroke-width="1.1"/><polyline points="1451.3,882.4 1451.3,893.6 1469.0,890.8" fill="none" stroke="#fff" stroke-width="1.1"/><polyline points="1438.7,897.8 1469.0,899.2" fill="none" stroke="#fff" stroke-width="1.1"/><polyline points="1438.7,904.8 1451.3,913.2 1469.0,910.4" fill="none" stroke="#fff" stroke-width="1.1"/><polyline points="1440.1,920.3 1463.9,921.7" fill="none" stroke="#fff" stroke-width="1.1"/><polyline points="1451.3,913.2 1452.7,928.7" fill="none" stroke="#fff" stroke-width="1.1"/><polyline points="1421.8,888.0 1431.7,886.6" fill="none" stroke="#fff" stroke-width="1.1"/><polyline points="1461.1,899.2 1462.5,916.1" fill="none" stroke="#fff" stroke-width="1.1"/><polygon points="1452.7,871.8 1459.7,871.8 1461.8,881.0 1453.4,881.0" fill="#1a73e8" stroke="none" stroke-width="0"/><polygon points="1432.4,890.8 1441.5,890.8 1440.1,895.0 1435.2,897.8 1432.4,895.0" fill="#8ab4f8" stroke="none" stroke-width="0"/><polygon points="1445.7,932.9 1451.3,930.1 1457.6,926.6 1456.9,932.9 1451.3,935.7 1446.4,937.1" fill="#8ab4f8" stroke="none" stroke-width="0"/></svg>
</body></html>
